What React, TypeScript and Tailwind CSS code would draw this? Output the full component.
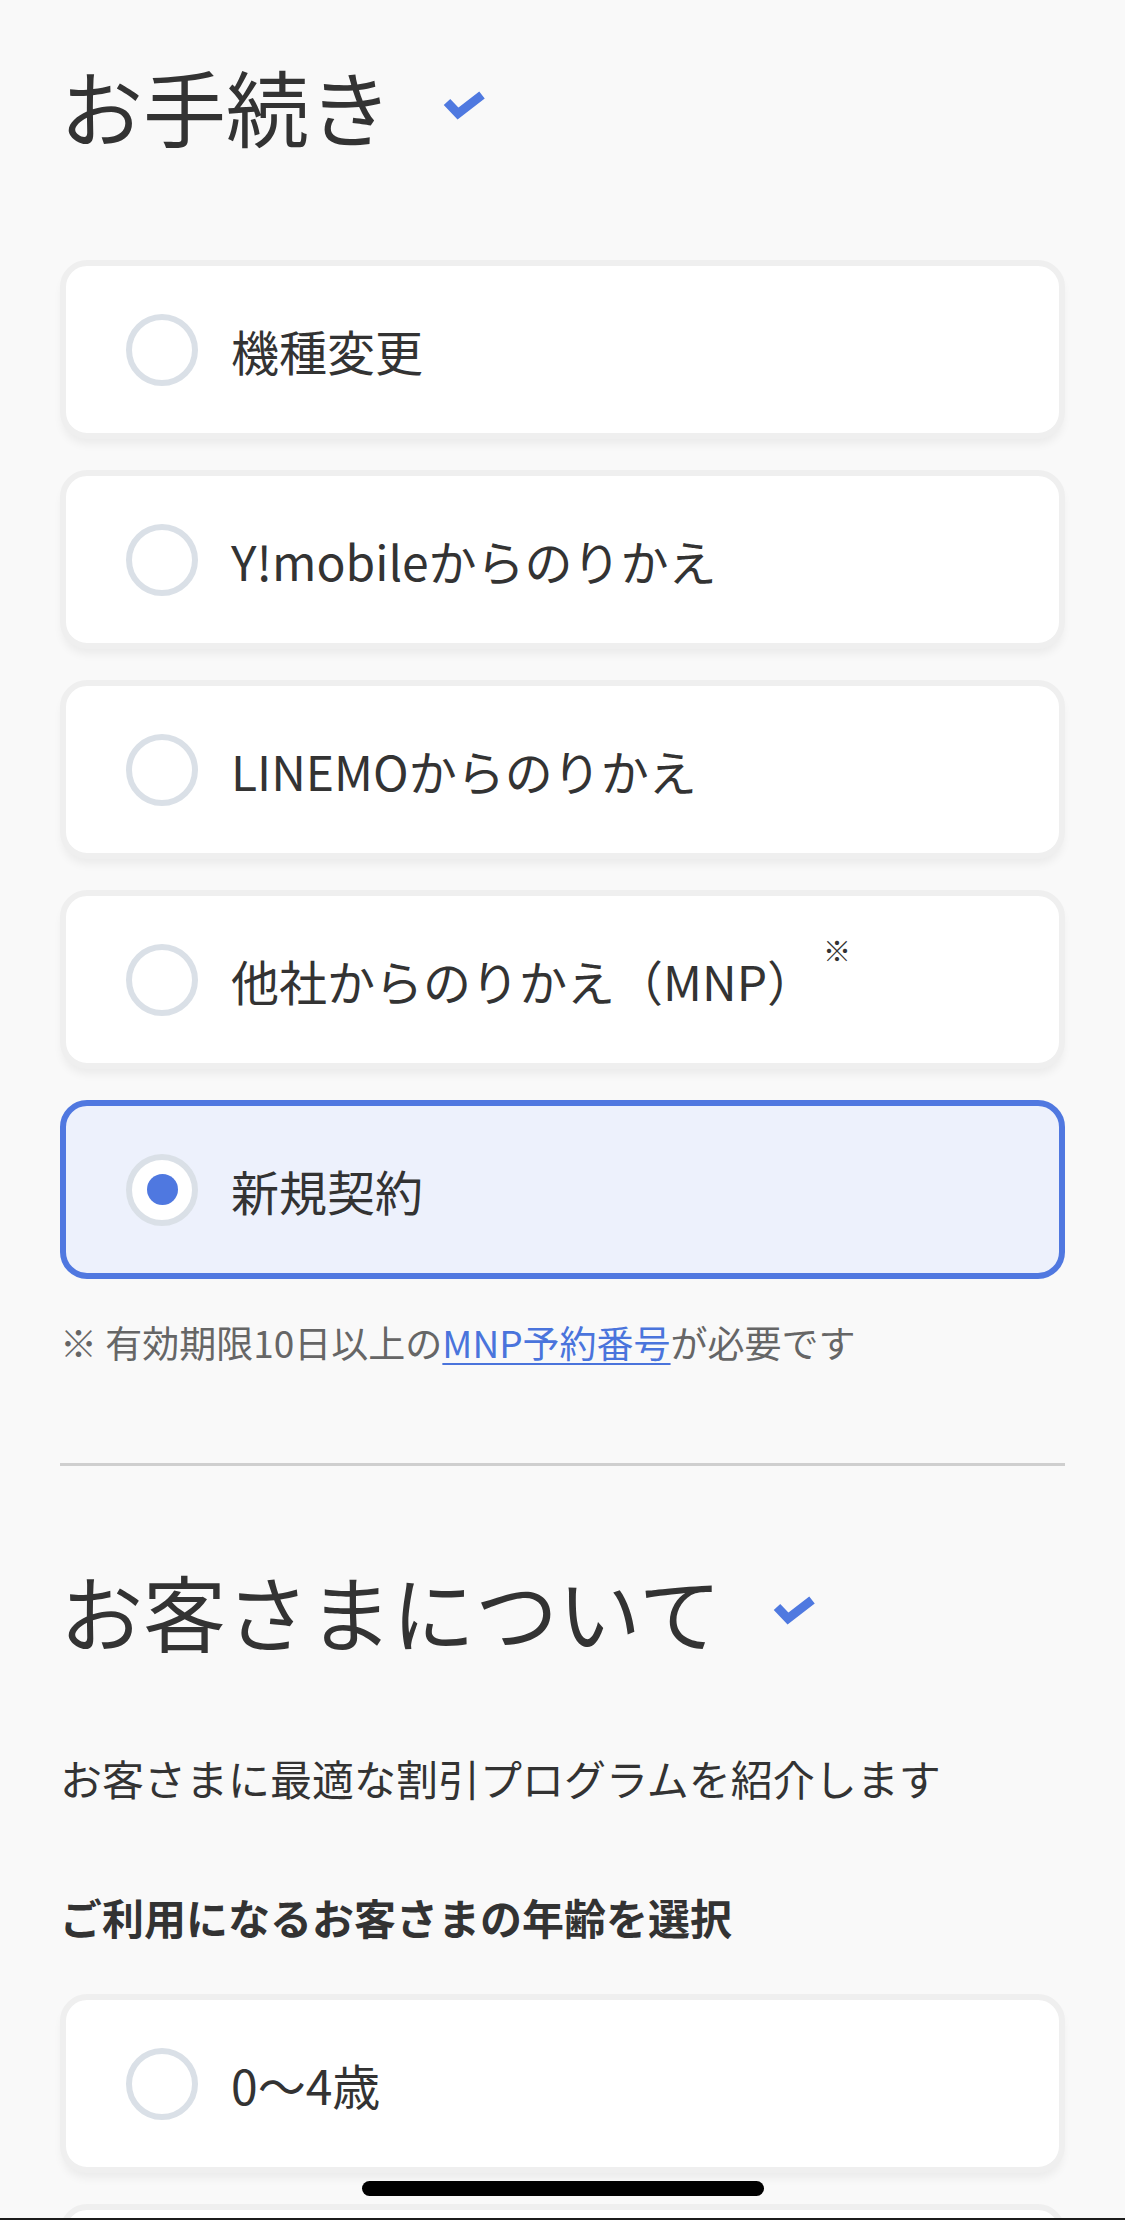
import clsx from 'clsx';

type Option = {
  label: string;
  selected?: boolean;
  mark?: boolean;
};

const PROCEDURES: Option[] = [
  { label: '機種変更' },
  { label: 'Y!mobileからのりかえ' },
  { label: 'LINEMOからのりかえ' },
  { label: '他社からのりかえ（MNP）', mark: true },
  { label: '新規契約', selected: true },
];

// second age card is cut by the bottom edge, only its top border shows
const AGES: Option[] = [{ label: '0〜4歳' }, { label: '' }];

function Check() {
  return (
    <svg width="42" height="32" viewBox="0 0 42 32" fill="none" className="ml-[51px] shrink-0">
      <polyline
        points="4,13 15,24.5 39,6"
        stroke="#4f79e0"
        strokeWidth="9"
        strokeLinejoin="miter"
        strokeLinecap="butt"
      />
    </svg>
  );
}

function SectionTitle({ children }: { children: string }) {
  return (
    <div className="flex items-center">
      <h2 className="text-[83px] leading-[120px] font-normal text-[#333]">{children}</h2>
      <Check />
    </div>
  );
}

function OptionCard({ label, selected, mark }: Option) {
  return (
    <div
      className={clsx(
        'flex h-[179px] items-center gap-[33px] rounded-[27px] border-[6px] px-[60px]',
        selected
          ? 'border-[#5078e0] bg-[#edf1fc]'
          : 'border-[#efefef] bg-white shadow-[0_7px_10px_-2px_rgba(0,0,0,0.06)]'
      )}
    >
      <span className="flex size-[72px] shrink-0 items-center justify-center rounded-full border-[6px] border-[#dae0e7] bg-white">
        {selected && <span className="size-[31px] rounded-full bg-[#4f78e0]" />}
      </span>
      {label && (
        <span className="text-[48px] leading-[88px] text-[#333]">
          {label}
          {mark && <span className="ml-[8px] align-top text-[28px] leading-none">※</span>}
        </span>
      )}
    </div>
  );
}

export default function App() {
  return (
    <div className="relative h-[2220px] overflow-hidden bg-[#f9f9f9] font-['Noto_Sans_CJK_JP','Noto_Sans',sans-serif]">
      <div className="px-[60px] pt-[45px]">
        <SectionTitle>お手続き</SectionTitle>

        <div className="mt-[95px] flex flex-col gap-[31px]">
          {PROCEDURES.map((o) => (
            <OptionCard key={o.label} {...o} />
          ))}
        </div>

        <p className="mt-[36px] text-[37px] leading-[54px] text-[#666]">
          ※ 有効期限10日以上の
          <a href="#" className="text-[#4a74dc] underline decoration-2 underline-offset-[5px]">
            MNP予約番号
          </a>
          が必要です
        </p>

        <hr className="mt-[94px] h-[3px] border-0 bg-[#cfcfcf]" />

        <div className="mt-[84px]">
          <SectionTitle>お客さまについて</SectionTitle>
        </div>

        <p className="mt-[76px] text-[42px] leading-[63px] text-[#333]">
          お客さまに最適な割引プログラムを紹介します
        </p>

        <p className="mt-[76px] text-[42px] leading-[63px] font-bold text-[#333]">
          ご利用になるお客さまの年齢を選択
        </p>

        <div className="mt-[46px] flex flex-col gap-[31px]">
          {AGES.map((o, i) => (
            <OptionCard key={i} {...o} />
          ))}
        </div>
      </div>

      {/* home indicator */}
      <div className="absolute bottom-[24px] left-1/2 h-[15px] w-[402px] -translate-x-1/2 rounded-full bg-black" />
      <div className="absolute bottom-0 left-0 h-[2px] w-full bg-[#1c1c1c]" />
    </div>
  );
}
